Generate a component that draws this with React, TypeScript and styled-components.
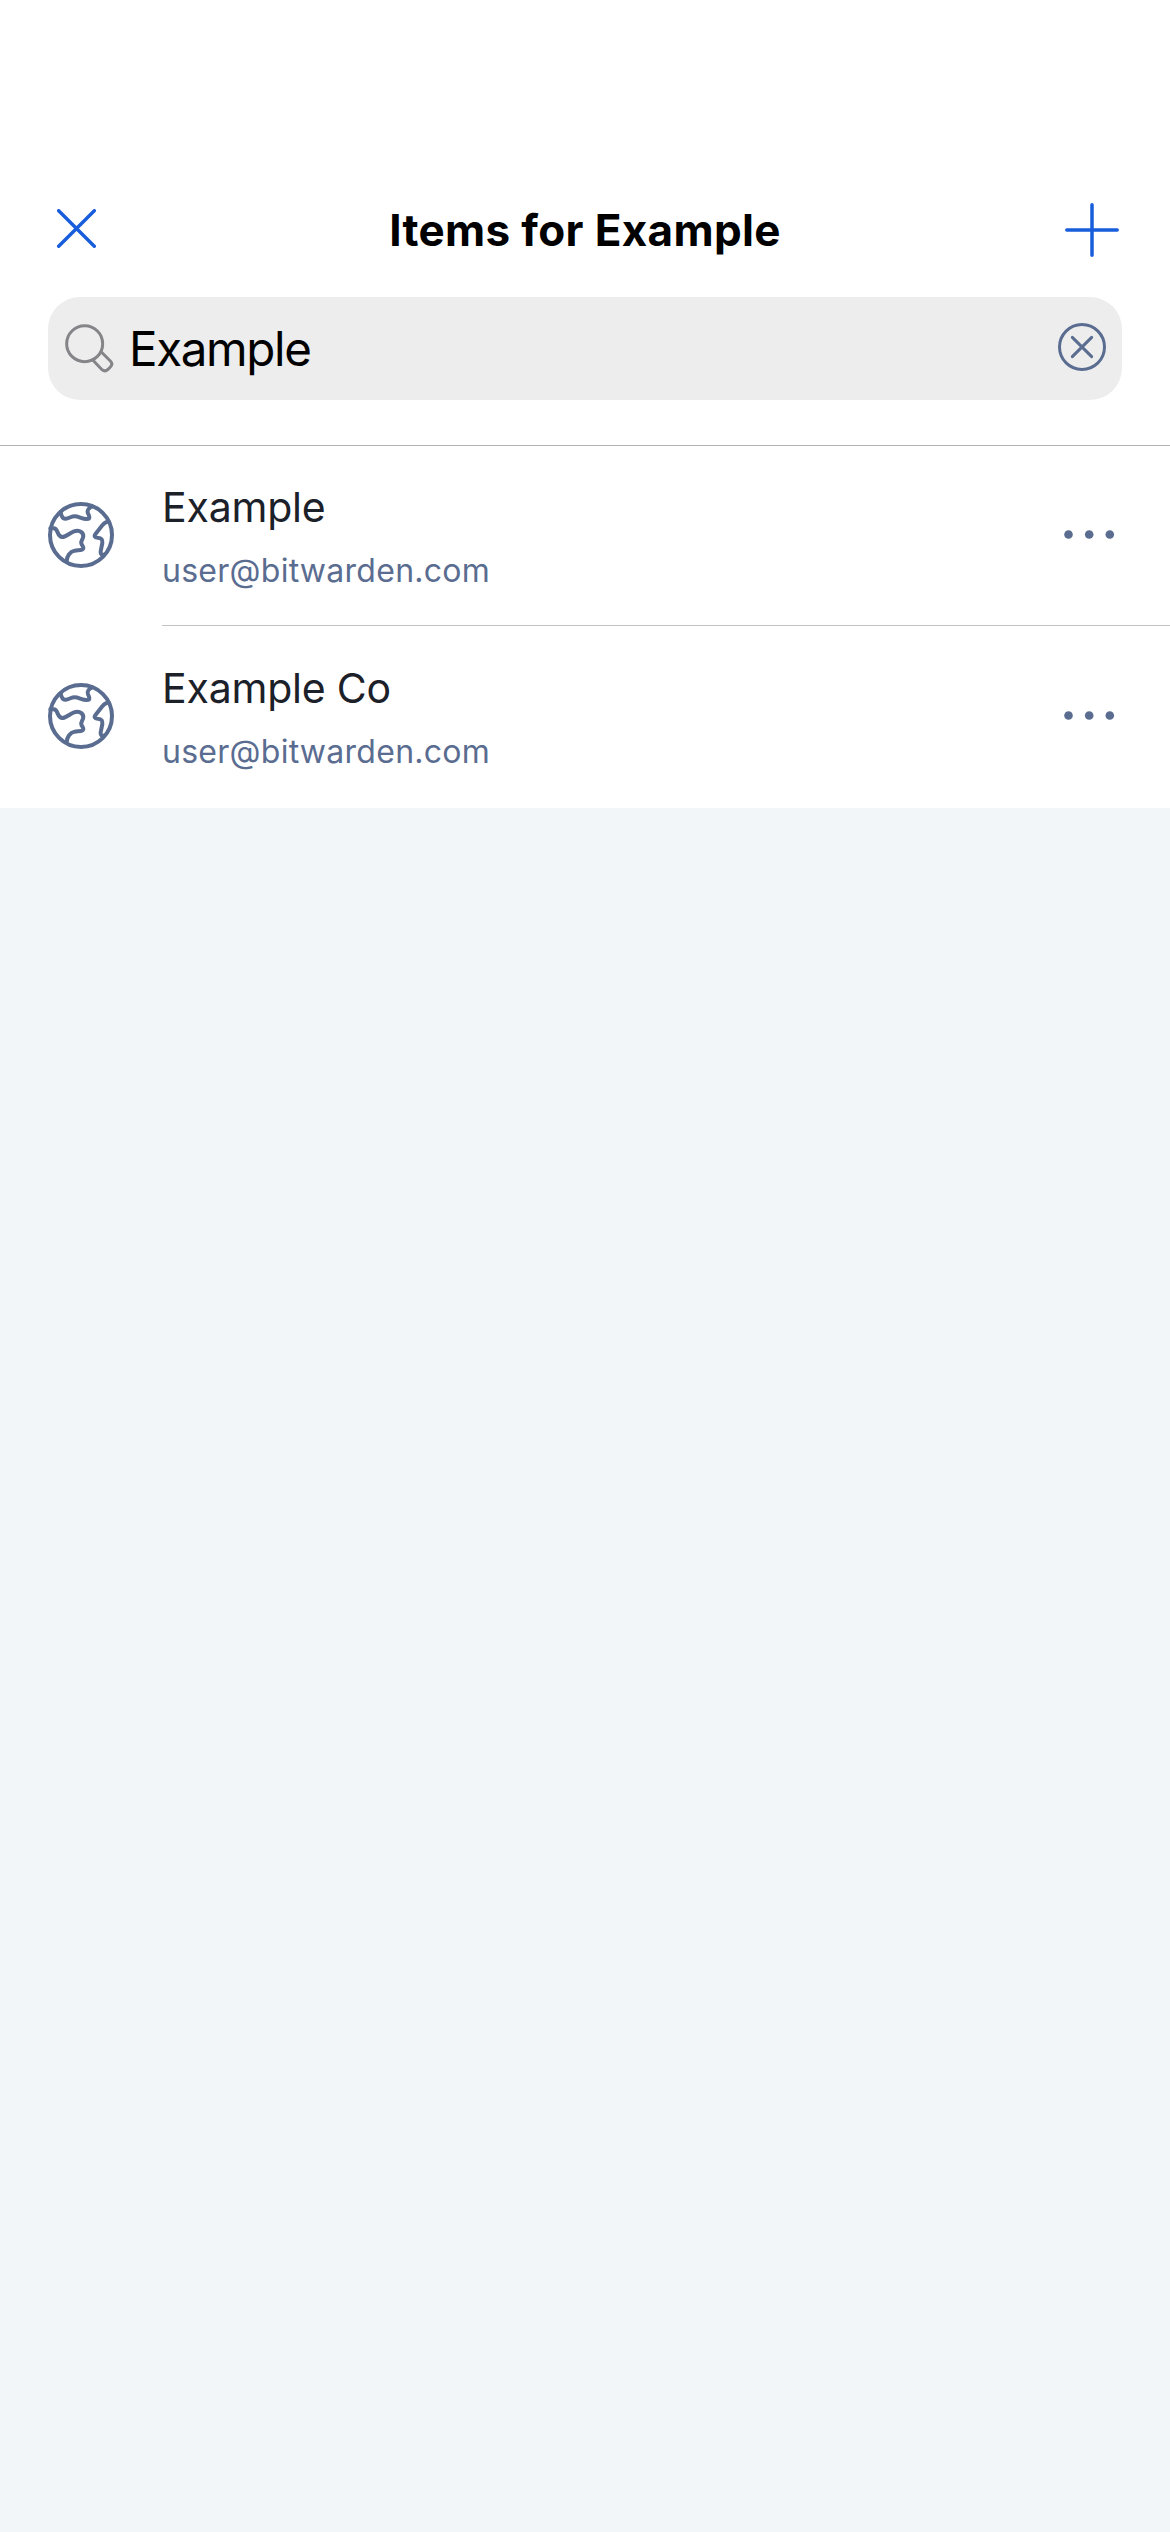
import React from "react";
import styled, { createGlobalStyle } from "styled-components";

const GlobalStyle = createGlobalStyle`
  * { box-sizing: border-box; }
  body {
    margin: 0;
    background: #f2f6f9;
    font-family: Inter, "Liberation Sans", sans-serif;
  }
`;

const Screen = styled.main`
  display: flex;
  flex-direction: column;
  min-height: 2532px;
  background: #f2f6f9;
`;

const Header = styled.header`
  display: flex;
  flex-direction: column;
  height: 446px;
  padding: 165px 48px 0;
  background: #fff;
  border-bottom: 1px solid #b2b2b2;
`;

const NavBar = styled.div`
  display: grid;
  grid-template-columns: 100px 1fr 100px;
  align-items: center;
  height: 132px;
`;

const IconButton = styled.button<{ $align?: "start" | "end" }>`
  display: flex;
  align-items: center;
  justify-content: ${(p) => (p.$align === "end" ? "flex-end" : "flex-start")};
  padding: 0;
  border: 0;
  background: none;
  color: #175ddc;
`;

const CloseButton = styled(IconButton)`
  padding: 0 0 5px 9px;
`;

const AddButton = styled(IconButton)`
  padding: 0 3px 3px 0;
`;

const Title = styled.h1`
  margin: 0;
  padding-bottom: 2px;
  text-align: center;
  white-space: nowrap;
  font-size: 44px;
  line-height: 56px;
  font-weight: 650;
  letter-spacing: 0.35px;
  color: #000;
`;

const SearchBar = styled.div`
  display: flex;
  align-items: center;
  height: 103px;
  padding: 0 16px 0 17px;
  border-radius: 32px;
  background: #ededed;
`;

const SearchText = styled.span`
  flex: 1;
  padding-left: 15px;
  font-size: 47.5px;
  line-height: 60px;
  letter-spacing: -1.35px;
  color: #000;
`;

const ClearButton = styled(IconButton)`
  color: #5a6d91;
  padding-bottom: 3px;
`;

const List = styled.ul`
  margin: 0;
  padding: 0;
  list-style: none;
  background: #fff;
`;

const Row = styled.li`
  display: flex;
  height: 181px;
  padding-left: 48px;
  color: #5a6d91;
`;

const RowIcon = styled.div`
  width: 114px;
  padding-top: 56px;
`;

const RowBody = styled.div<{ $divided: boolean }>`
  flex: 1;
  display: flex;
  justify-content: space-between;
  height: 180px;
  border-bottom: 1px solid ${(p) => (p.$divided ? "#c2c2c4" : "transparent")};
`;

const RowText = styled.div`
  display: flex;
  flex-direction: column;
  padding-top: 35px;
`;

const Name = styled.span`
  font-size: 41px;
  line-height: 52px;
  letter-spacing: -0.2px;
  color: #1b2029;
`;

const Username = styled.span`
  margin-top: 16px;
  font-size: 32px;
  line-height: 44px;
  letter-spacing: 0.27px;
`;

const MoreButton = styled(IconButton)`
  padding: 0 55px 2px 0;
  color: #5a6d91;
`;

const CloseIcon = () => (
  <svg width="39" height="39" viewBox="0 0 39 39" fill="none" stroke="currentColor" strokeWidth="3.4" strokeLinecap="round">
    <path d="M1.7 1.7 37.3 37.3M37.3 1.7 1.7 37.3" />
  </svg>
);

const PlusIcon = () => (
  <svg width="54" height="54" viewBox="0 0 54 54" fill="none" stroke="currentColor" strokeWidth="3.5" strokeLinecap="round">
    <path d="M27 1.8V52.2M1.8 27H52.2" />
  </svg>
);

const SearchIcon = () => (
  <svg width="49" height="49" viewBox="107 131 147 147" fill="none" stroke="#858589" strokeWidth="9" strokeLinejoin="round">
    <circle cx="166" cy="190" r="54" />
    <path d="M191 240 218 268Q227 276 236 267L243 260Q252 251 243 242L216 215" />
  </svg>
);

const ClearIcon = () => (
  <svg width="48" height="48" viewBox="0 0 144 144" fill="none" stroke="currentColor" strokeWidth="9" strokeLinecap="round">
    <circle cx="72" cy="72" r="67.5" />
    <path d="M43 43 101 101M101 43 43 101" />
  </svg>
);

const GlobeIcon = () => (
  <svg width="66" height="66" viewBox="144 189 198 198" fill="none" stroke="currentColor" strokeWidth="12" strokeLinecap="round" strokeLinejoin="round">
    <circle cx="243" cy="288" r="93" />
    <path d="M182 220C184 231 189 240 197 239C207 238 214 232 224 232C236 232 246 240 260 240C272 240 268 231 264 223C260 214 267 206 276 203" />
    <path d="M151 268H161C176 268 170 294 187 294C199 294 208 282 222 277C241 271 253 283 249 296C246 305 242 307 244 313C246 320 250 322 250 327C249 336 235 333 224 335C210 338 200 352 200 367" />
    <path d="M326 248C317 247 312 252 307 259L287 284C281 292 284 295 293 296C305 297 308 302 307 312L302 337C301 344 303 347 311 347" />
  </svg>
);

const MoreIcon = () => (
  <svg width="51" height="9" viewBox="0 0 51 9" fill="currentColor">
    <circle cx="4.5" cy="4.5" r="4.3" />
    <circle cx="25.2" cy="4.5" r="4.3" />
    <circle cx="45.8" cy="4.5" r="4.3" />
  </svg>
);

const items = [
  { name: "Example", username: "user@bitwarden.com" },
  { name: "Example Co", username: "user@bitwarden.com" },
];

export default function App() {
  return (
    <Screen>
      <GlobalStyle />
      <Header>
        <NavBar>
          <CloseButton aria-label="Close"><CloseIcon /></CloseButton>
          <Title>Items for Example</Title>
          <AddButton $align="end" aria-label="Add"><PlusIcon /></AddButton>
        </NavBar>
        <SearchBar>
          <SearchIcon />
          <SearchText>Example</SearchText>
          <ClearButton aria-label="Clear"><ClearIcon /></ClearButton>
        </SearchBar>
      </Header>
      <List>
        {items.map((item, i) => (
          <Row key={item.name}>
            <RowIcon><GlobeIcon /></RowIcon>
            <RowBody $divided={i < items.length - 1}>
              <RowText>
                <Name>{item.name}</Name>
                <Username>{item.username}</Username>
              </RowText>
              <MoreButton $align="end" aria-label="More"><MoreIcon /></MoreButton>
            </RowBody>
          </Row>
        ))}
      </List>
    </Screen>
  );
}
